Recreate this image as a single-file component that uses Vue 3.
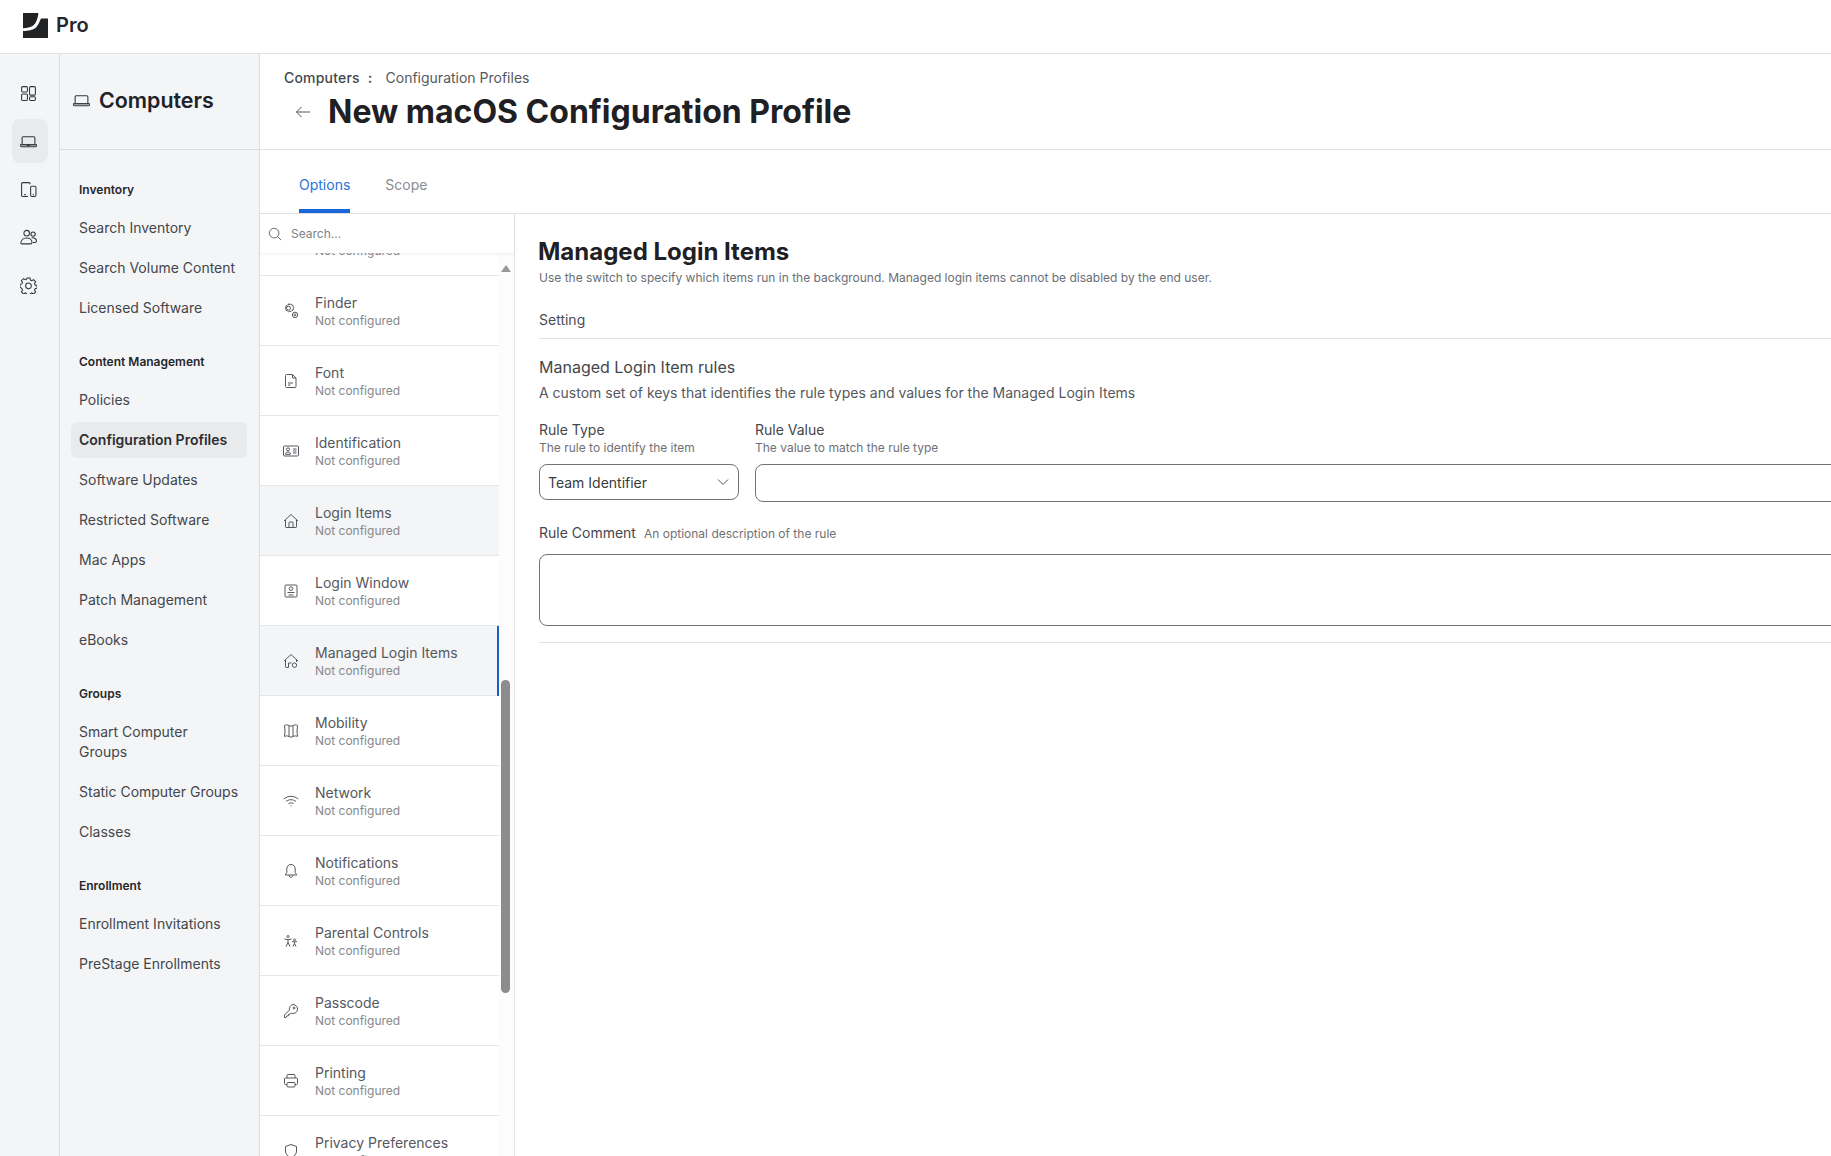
<script setup>
const railIcons = [
  { paths: ['M2.5 1.5h3.5a1 1 0 0 1 1 1v3a1 1 0 0 1-1 1H2.5a1 1 0 0 1-1-1v-3a1 1 0 0 1 1-1z', 'M2.5 8.5h3.5a1 1 0 0 1 1 1v4a1 1 0 0 1-1 1H2.5a1 1 0 0 1-1-1v-4a1 1 0 0 1 1-1z', 'M10 1.5h3.5a1 1 0 0 1 1 1v6a1 1 0 0 1-1 1H10a1 1 0 0 1-1-1v-6a1 1 0 0 1 1-1z', 'M10 11h3.5a1 1 0 0 1 1 1v1.5a1 1 0 0 1-1 1H10a1 1 0 0 1-1-1V12a1 1 0 0 1 1-1z'] },
  { active: true, paths: ['M3 3.5h10a1 1 0 0 1 1 1V11H2V4.5a1 1 0 0 1 1-1z', 'M.5 11h15v.7a1.3 1.3 0 0 1-1.3 1.3H1.8A1.3 1.3 0 0 1 .5 11.7z', 'M6.5 11.8h3'] },
  { paths: ['M9.5 3V2.5a1 1 0 0 0-1-1H2.5a1 1 0 0 0-1 1v11a1 1 0 0 0 1 1h5', 'M11 5h3a1 1 0 0 1 1 1v7.5a1 1 0 0 1-1 1h-3a1 1 0 0 1-1-1V6a1 1 0 0 1 1-1z', 'M4 12.8h1.5', 'M12 12.8h1'] },
  { paths: ['M6.3 1.3a2.6 2.6 0 1 1 0 5.2a2.6 2.6 0 0 1 0-5.2z', 'M12.3 2.8a2 2 0 1 1 0 4a2 2 0 0 1 0-4z', 'M.8 13.5c0-3 2.4-5 5.5-5s5 2 5 4.2c0 .8-.5 1.3-1.3 1.3H2c-.7 0-1.2-.1-1.2-.5z', 'M11 8.3c2.5-.3 4.5 1 4.5 3c0 .9-.6 1.4-1.4 1.4h-2'] },
  { paths: ['M6.6 1h2.8l.4 1.9 1.3.6 1.7-1 1.9 2-1 1.6.5 1.4 1.8.4v2.7l-1.8.4-.5 1.4 1 1.6-1.9 2-1.7-1-1.3.6-.4 1.9H6.6l-.4-1.9-1.3-.6-1.7 1-1.9-2 1-1.6-.5-1.4L0 9.6V6.9l1.8-.4.5-1.4-1-1.6 1.9-2 1.7 1 1.3-.6z', 'M8 5.6a2.7 2.7 0 1 1 0 5.4a2.7 2.7 0 0 1 0-5.4z'] },
]

const sideGroups = [
  { title: 'Inventory', links: ['Search Inventory', 'Search Volume Content', 'Licensed Software'] },
  { title: 'Content Management', links: ['Policies', 'Configuration Profiles', 'Software Updates', 'Restricted Software', 'Mac Apps', 'Patch Management', 'eBooks'] },
  { title: 'Groups', links: ['Smart Computer Groups', 'Static Computer Groups', 'Classes'] },
  { title: 'Enrollment', links: ['Enrollment Invitations', 'PreStage Enrollments'] },
]

const payloads = [
  { name: 'FileVault', paths: [] },
  { name: 'Finder', paths: ['M5.5 .8l1.200.5 1.200-.3.9 1 1.200.4.1 1.300.8 1-.7 1.100-.1 1.300-1.200.4-.9 1-1.300-.2-1.200.5-1-.9-1.300-.4-.2-1.300-.8-1 .7-1.100.1-1.300 1.200-.4.8-1 1.300.2z', 'M5.500 3.200a2 2 0 1 1 0 4a2 2 0 0 1 0-4z', 'M12 9.200a2.700 2.700 0 1 1 0 5.400a2.700 2.700 0 0 1 0-5.400z', 'M12 11a.9.9 0 1 1 0 1.800a.9.9 0 0 1 0-1.800z'] },
  { name: 'Font', paths: ['M3.500 1.500h6l3.500 3.500v8.500a1 1 0 0 1-1 1h-8.500a1 1 0 0 1-1-1v-11a1 1 0 0 1 1-1z', 'M9.500 1.500V5H13', 'M5 10h5', 'M5 12h2.500'] },
  { name: 'Identification', paths: ['M1.500 3h13a1 1 0 0 1 1 1v8a1 1 0 0 1-1 1h-13a1 1 0 0 1-1-1V4a1 1 0 0 1 1-1z', 'M5 4.800a1.500 1.500 0 1 1 0 3a1.500 1.500 0 0 1 0-3z', 'M2.500 11.300c0-1.500 1.100-2.300 2.500-2.300s2.500.8 2.500 2.300z', 'M10 6h3.500', 'M10 8h3.500', 'M10 10h3.500'] },
  { name: 'Login Items', hover: true, paths: ['M1 8l7-6.500L15 8', 'M2.500 7v6.800a.7.7 0 0 0 .7.7h9.600a.7.7 0 0 0 .7-.7V7', 'M6 14.500V9.800a.8.8 0 0 1 .8-.8h2.400a.8.8 0 0 1 .8.8v4.700'] },
  { name: 'Login Window', paths: ['M3 2h10a1 1 0 0 1 1 1v10a1 1 0 0 1-1 1H3a1 1 0 0 1-1-1V3a1 1 0 0 1 1-1z', 'M8 3.800a1.800 1.800 0 1 1 0 3.600a1.800 1.800 0 0 1 0-3.600z', 'M4.500 9.500h7', 'M5.500 12h5'] },
  { name: 'Managed Login Items', active: true, paths: ['M1 8l7-6.500L15 8', 'M2.500 7v6.800a.7.7 0 0 0 .7.7h2.300V10h3', 'M13.500 7v2', 'M11.500 10a2.200 2.200 0 1 1 0 4.400a2.200 2.200 0 0 1 0-4.400z'] },
  { name: 'Mobility', paths: ['M1.500 2.500c1.500-.8 3-.8 4.500 0c1.400.8 2.600.8 4 0c1.500-.8 3-.8 4.500 0l-.5 5.500.5 5.500c-1.500-.8-3-.8-4.500 0c-1.400.8-2.600.8-4 0c-1.500-.8-3-.8-4.500 0l.5-5.500z', 'M6 3V13.500', 'M10 3V13.500'] },
  { name: 'Network', paths: ['M.8 6c4.200-3.600 10.200-3.600 14.400 0', 'M3 8.500c3-2.400 7-2.400 10 0', 'M5.300 10.800c1.700-1.200 3.700-1.200 5.400 0', 'M7.500 13h1'] },
  { name: 'Notifications', paths: ['M8 1.500c-2.700 0-4.200 2-4.200 4.500v3.500L2.300 12h11.400l-1.500-2.500V6c0-2.500-1.500-4.500-4.200-4.500z', 'M6 12.200c0 2.800 4 2.800 4 0'] },
  { name: 'Parental Controls', paths: ['M5 2.500a1 1 0 1 1 0 2a1 1 0 0 1 0-2z', 'M1.500 6l3.500.7L8.500 6', 'M5 6.700V9.500L3 13.500', 'M5 9.500l2 4', 'M11.500 6a.9.9 0 1 1 0 1.800a.9.9 0 0 1 0-1.800z', 'M9 8.500l2.500.5 2.500-.5', 'M11.500 9v1.500L10 13.500', 'M11.500 10.500l1.500 3'] },
  { name: 'Passcode', paths: ['M10 1.500a4.500 4.500 0 1 1-1.800 8.600L7 11.300H5.500v1.500H4l-1 1.700H1.500V12l5-5A4.500 4.500 0 0 1 10 1.500z', 'M11 4a1 1 0 1 1 0 2a1 1 0 0 1 0-2z'] },
  { name: 'Printing', paths: ['M4 5V2.500a1 1 0 0 1 1-1h6a1 1 0 0 1 1 1V5', 'M4 11.500H2.500a1 1 0 0 1-1-1V6a1 1 0 0 1 1-1h11a1 1 0 0 1 1 1v4.500a1 1 0 0 1-1 1H12', 'M5 9.500h6a1 1 0 0 1 1 1V13a1 1 0 0 1-1 1H5a1 1 0 0 1-1-1v-2.500a1 1 0 0 1 1-1z'] },
  { name: 'Privacy Preferences', paths: ['M8 1.500l5.500 2v4.500c0 3.500-2.500 5.500-5.500 6.500c-3-1-5.500-3-5.500-6.500V3.500z'] },
]
</script>

<template>
  <div class="app">
    <header class="topbar">
      <svg class="logo" viewBox="0 0 25 25" aria-hidden="true">
        <path d="M0 0h14.500c.8 0 1 .5.800 1.200C14.500 6 13 10.500 10 12.800c-2.500 1.800-6 2.200-10 2.400z" />
        <path d="M25 5.500V25H0v-7c5-.2 10-.8 12.800-3.300C15.500 12 16.500 8.500 18 5.500z" />
      </svg>
      <span class="brand">Pro</span>
    </header>

    <div class="body">
      <nav class="rail">
        <a v-for="(icon, i) in railIcons" :key="i" class="rail-btn" :class="{ on: icon.active }">
          <svg class="rail-icon" viewBox="0 0 16 16" aria-hidden="true">
            <path v-for="d in icon.paths" :key="d" :d="d" />
          </svg>
        </a>
      </nav>

      <aside class="side">
        <div class="side-head">
          <svg class="side-head-icon" viewBox="0 0 16 16" aria-hidden="true">
            <path d="M3 3.500h10a1 1 0 0 1 1 1V11H2V4.500a1 1 0 0 1 1-1z" />
            <path d="M.5 11h15v.7a1.300 1.300 0 0 1-1.300 1.300H1.800A1.300 1.300 0 0 1 .5 11.700z" />
          </svg>
          <span>Computers</span>
        </div>
        <div class="side-nav">
          <section v-for="g in sideGroups" :key="g.title" class="side-group">
            <h3>{{ g.title }}</h3>
            <a
              v-for="l in g.links"
              :key="l"
              class="side-link"
              :class="{ current: l === 'Configuration Profiles', wrap: l === 'Smart Computer Groups' }"
            >{{ l }}</a>
          </section>
        </div>
      </aside>

      <main class="main">
        <div class="page-head">
          <div class="crumbs"><b>Computers</b><i>:</i><span>Configuration Profiles</span></div>
          <div class="title-row">
            <svg class="back" viewBox="0 0 16 16" aria-hidden="true"><path d="M15 8H1.500M6.500 3l-5 5 5 5" /></svg>
            <h1>New macOS Configuration Profile</h1>
          </div>
        </div>

        <div class="tabs">
          <a class="tab on">Options</a>
          <a class="tab">Scope</a>
        </div>

        <div class="split">
          <div class="payloads">
            <div class="search">
              <svg viewBox="0 0 16 16" aria-hidden="true"><circle cx="7" cy="7" r="5.500" /><path d="M11 11l4 4" /></svg>
              <span>Search...</span>
            </div>
            <div class="scroller">
              <div class="list">
                <div v-for="p in payloads" :key="p.name" class="item" :class="{ hover: p.hover, active: p.active }">
                  <svg class="item-icon" viewBox="0 0 16 16" aria-hidden="true">
                    <path v-for="d in p.paths" :key="d" :d="d" />
                  </svg>
                  <div class="item-text">
                    <div class="item-name">{{ p.name }}</div>
                    <div class="item-sub">Not configured</div>
                  </div>
                </div>
              </div>
              <div class="track">
                <div class="arrow"></div>
                <div class="thumb"></div>
              </div>
            </div>
          </div>

          <div class="detail">
            <h2>Managed Login Items</h2>
            <p class="lead">Use the switch to specify which items run in the background. Managed login items cannot be disabled by the end user.</p>
            <div class="setting">Setting</div>
            <h4>Managed Login Item rules</h4>
            <p class="desc">A custom set of keys that identifies the rule types and values for the Managed Login Items</p>
            <div class="fields">
              <div class="field type">
                <label>Rule Type</label>
                <small>The rule to identify the item</small>
                <div class="select">
                  <span>Team Identifier</span>
                  <svg viewBox="0 0 12 8" aria-hidden="true"><path d="M1 1.500l5 5 5-5" /></svg>
                </div>
              </div>
              <div class="field value">
                <label>Rule Value</label>
                <small>The value to match the rule type</small>
                <div class="input"></div>
              </div>
            </div>
            <div class="comment-label"><label>Rule Comment</label><small>An optional description of the rule</small></div>
            <div class="textarea"></div>
            <div class="rule"></div>
          </div>
        </div>
      </main>
    </div>
  </div>
</template>

<style>
html, body { margin: 0; height: 100%; overflow: hidden; background: #fff; }
</style>

<style scoped>
.app { display: flex; flex-direction: column; height: 1156px; overflow: hidden; font-family: Inter, "Noto Sans", sans-serif; color: #26272b; }
.topbar { height: 53px; border-bottom: 1px solid #e1e2e4; display: flex; align-items: center; padding-left: 23px; gap: 8px; box-sizing: content-box; flex: none; }
.logo { width: 25px; height: 25px; fill: #222325; margin-top: -2px; }
.brand { font-size: 20px; font-weight: 600; color: #26272b; margin-top: -3px; }
.body { flex: 1; display: flex; min-height: 0; }

.rail { width: 59px; flex: none; background: #f4f5f7; border-right: 1px solid #dcdde0; display: flex; flex-direction: column; align-items: center; padding-top: 17px; gap: 4px; }
.rail-btn { width: 36px; height: 44px; border-radius: 8px; display: flex; align-items: center; justify-content: center; }
.rail-btn.on { background: #e9eaec; }
.rail-icon { width: 17px; height: 17px; fill: none; stroke: #33353a; stroke-width: 1; margin-left: -2px; }

.side { width: 199px; flex: none; background: #f4f5f7; border-right: 1px solid #dcdde0; display: flex; flex-direction: column; }
.side-head { height: 96px; border-bottom: 1px solid #dcdde0; display: flex; align-items: center; gap: 9px; padding: 0 0 2px 13px; box-sizing: border-box; font-size: 21.4px; font-weight: 600; color: #212226; }
.side-head span { margin-top: -1px; }
.side-head-icon { width: 17px; height: 17px; fill: none; stroke: #33353a; stroke-width: 1; }
.side-nav { padding: 30px 12px 0 11px; }
.side-group { margin-bottom: 24px; }
.side-group h3 { margin: 0; padding-left: 8px; height: 20px; line-height: 20px; font-size: 12px; font-weight: 600; color: #26272b; }
.side-link { display: block; padding: 10px 8px; line-height: 20px; font-size: 14px; color: #43464b; white-space: nowrap; }
.side-group h3 + .side-link { margin-top: 8px; }
.side-link.wrap { white-space: normal; padding-right: 24px; }
.side-link.current { background: #e9eaec; border-radius: 6px; font-weight: 600; color: #2c2d31; margin: 2px 0; padding: 8px; }

.main { flex: 1; min-width: 0; display: flex; flex-direction: column; }
.page-head { height: 96px; box-sizing: border-box; border-bottom: 1px solid #e1e2e4; padding: 15px 0 0 24px; flex: none; }
.crumbs { display: flex; align-items: center; font-size: 14px; line-height: 18px; color: #55585d; }
.crumbs b { font-weight: 500; color: #44474b; letter-spacing: .2px; }
.crumbs i { font-style: normal; font-weight: 700; margin: 0 13px 0 8px; }
.title-row { display: flex; align-items: center; margin-top: 5px; }
.back { width: 16px; height: 16px; margin-left: 11px; margin-right: 17px; fill: none; stroke: #55585d; stroke-width: 1; }
h1 { margin: 0; font-size: 32px; line-height: 40px; font-weight: 700; color: #1f2023; }

.tabs { height: 64px; box-sizing: border-box; border-bottom: 1px solid #e1e2e4; display: flex; gap: 35px; padding-left: 39px; flex: none; }
.tab { display: flex; align-items: center; height: 63px; box-sizing: border-box; padding-top: 6px; font-size: 14px; color: #8a8c90; }
.tab.on { color: #2a72dc; box-shadow: inset 0 -4px 0 #1b66d8; }

.split { flex: 1; display: flex; min-height: 0; }
.payloads { width: 254px; flex: none; border-right: 1px solid #e4e5e7; background: #fff; display: flex; flex-direction: column; min-height: 0; position: relative; }
.search { height: 39px; flex: none; display: flex; align-items: center; padding-left: 8px; gap: 9px; font-size: 12px; color: #808287; background: #fff; position: relative; z-index: 1; box-shadow: 0 1px 3px rgba(0,0,0,.07); }
.search svg { width: 14px; height: 14px; fill: none; stroke: #55585d; stroke-width: 1; }
.scroller { flex: 1; min-height: 0; overflow: hidden; position: relative; background: #fcfcfc; }
.list { width: 239px; margin-top: -47px; background: #fff; }
.item { height: 70px; box-sizing: border-box; border-bottom: 1px solid #e6e7e9; display: flex; align-items: center; padding-left: 23px; gap: 16px; position: relative; background: #fff; }
.item.hover, .item.active { background: #f4f5f7; }
.item.active::after { content: ""; position: absolute; top: 0; right: 0; bottom: -1px; width: 2px; background: #1c5fc0; }
.item-icon { width: 16px; height: 16px; flex: none; margin-top: 1px; fill: none; stroke: #55585d; stroke-width: 1; }
.item-text { margin-top: 2px; }
.item-name { font-size: 14px; line-height: 18px; color: #55585d; }
.item-sub { font-size: 12px; line-height: 16px; margin-top: 1px; color: #86888c; }
.track { position: absolute; top: 0; right: 2px; width: 13px; bottom: 0; }
.arrow { position: absolute; left: 2px; top: 12px; width: 0; height: 0; border-left: 5px solid transparent; border-right: 5px solid transparent; border-bottom: 7px solid #97989b; }
.thumb { position: absolute; left: 2px; top: 427px; width: 9px; height: 313px; border-radius: 5px; background: #8c8c8c; }

.detail { flex: 1; min-width: 0; overflow: hidden; padding: 22px 0 0 24px; }
.detail h2 { margin: 0 0 0 -1px; font-size: 24px; line-height: 32px; font-weight: 700; color: #1f2023; }
.lead { margin: 1px 0 0; font-size: 12px; line-height: 18px; color: #6b6e73; }
.setting { margin-top: 21px; height: 30px; line-height: 24px; font-size: 14px; color: #4a4c51; border-bottom: 1px solid #e1e2e4; }
.detail h4 { margin: 17px 0 0; font-size: 16px; line-height: 22px; font-weight: 400; color: #44474b; }
.desc { margin: 5px 0 0; font-size: 14px; line-height: 20px; color: #55585d; }
.fields { display: flex; gap: 16px; margin-top: 18px; width: calc(100% + 60px); }
.field { display: flex; flex-direction: column; }
.field.type { width: 200px; flex: none; }
.field.value { flex: 1; }
label { font-size: 14px; line-height: 18px; color: #44474b; }
small { font-size: 12px; line-height: 16px; color: #6f7276; }
.field small { margin-top: 1px; margin-bottom: 8px; }
.select { height: 36px; box-sizing: border-box; border: 1px solid #6f7276; border-radius: 8px; display: flex; align-items: center; justify-content: space-between; padding: 0 9px 0 8px; font-size: 14px; color: #3a3c40; }
.select svg { width: 12px; height: 8px; fill: none; stroke: #55585d; stroke-width: 1; }
.input { height: 38px; box-sizing: border-box; border: 1px solid #6f7276; border-radius: 8px; }
.comment-label { display: flex; align-items: baseline; gap: 8px; margin-top: 22px; }
.textarea { margin-top: 12px; height: 72px; width: calc(100% + 60px); box-sizing: border-box; border: 1px solid #6f7276; border-radius: 8px; }
.rule { margin-top: 16px; height: 1px; background: #e1e2e4; }
</style>
